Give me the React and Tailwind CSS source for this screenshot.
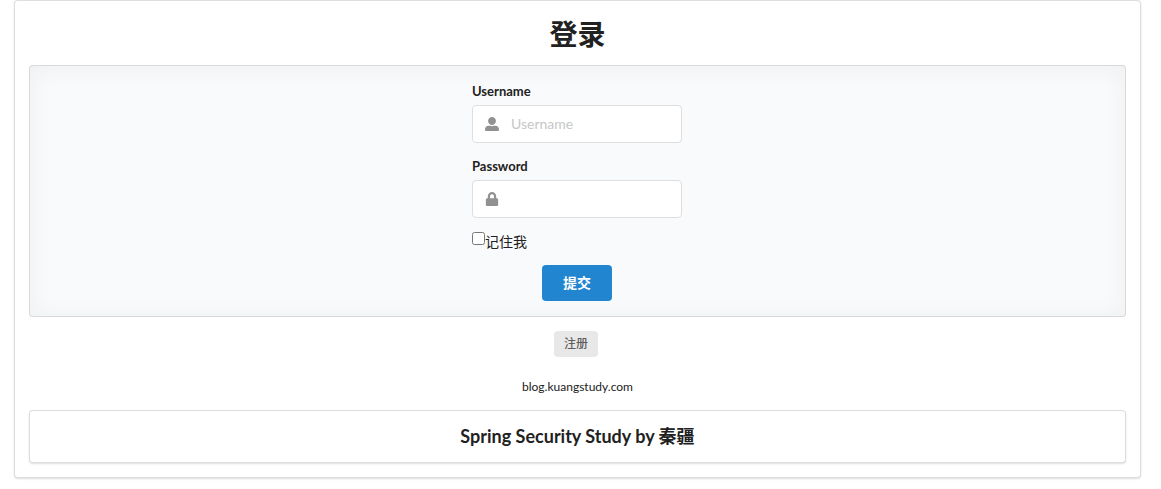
import { FaUserAlt, FaLock } from "react-icons/fa";

function Field({ id, label, icon, ...props }) {
  return (
    <div className="mb-3.5">
      <label htmlFor={id} className="block mb-1 text-[13px] leading-[19px] font-bold">
        {label}
      </label>
      <div className="relative">
        <span className="absolute left-3 inset-y-0 w-4 flex items-center justify-center text-[#919191]">
          {icon}
        </span>
        <input
          id={id}
          name={id}
          className="block w-full h-[38px] pl-[38px] pr-3.5 pb-0.5 text-sm bg-white border border-[#dededf] rounded outline-none placeholder:text-[#c7c7c7] focus:border-[#85b7d9]"
          {...props}
        />
      </div>
    </div>
  );
}

function LoginForm() {
  return (
    <form
      onSubmit={(e) => e.preventDefault()}
      className="flex justify-center mt-3 pt-4 pr-px pb-[15px] bg-[#f9fafb] border border-[#222426]/15 rounded shadow-[0_2px_25px_0_rgba(34,36,38,0.05)_inset]"
    >
      <div className="w-[210px]">
        <Field
          id="username"
          label="Username"
          type="text"
          placeholder="Username"
          icon={<FaUserAlt size={14} />}
        />
        <Field id="password" label="Password" type="password" icon={<FaLock size={14} />} />

        <div className="flex items-start mb-3.5">
          <input id="remember" name="remember" type="checkbox" className="w-[13px] h-[13px]" />
          <label htmlFor="remember" className="text-sm leading-[19px]">
            记住我
          </label>
        </div>

        <button
          type="submit"
          className="block mx-auto h-9 px-[21px] text-sm font-bold text-white bg-[#2185d0] rounded hover:bg-[#1678c2]"
        >
          提交
        </button>
      </div>
    </form>
  );
}

function App() {
  return (
    <div className="pl-3.5 pr-5 pb-2 font-['Lato','Noto_Sans_CJK_SC',sans-serif] text-sm text-[#212121]">
      <main className="p-3.5 bg-white border border-[#222426]/15 rounded shadow-[0_1px_2px_0_rgba(34,36,38,0.15)]">
        <h1 className="text-center text-[28px] leading-[38px] font-bold">登录</h1>

        <LoginForm />

        <div className="flex flex-col items-center mt-3.5">
          <a
            href="#register"
            className="mr-[3px] px-2.5 text-xs leading-[26px] font-medium text-[#5e5e5e] bg-[#e8e8e8] rounded"
          >
            注册
          </a>
          <small className="mt-5 mb-3.5 text-xs leading-[19px]">blog.kuangstudy.com</small>
        </div>

        <div className="py-3.5 bg-white border border-[#222426]/15 rounded shadow-[0_1px_2px_0_rgba(34,36,38,0.15)]">
          <h3 className="text-center text-lg leading-[23px] font-bold">
            Spring Security Study by 秦疆
          </h3>
        </div>
      </main>
    </div>
  );
}

export default App;
